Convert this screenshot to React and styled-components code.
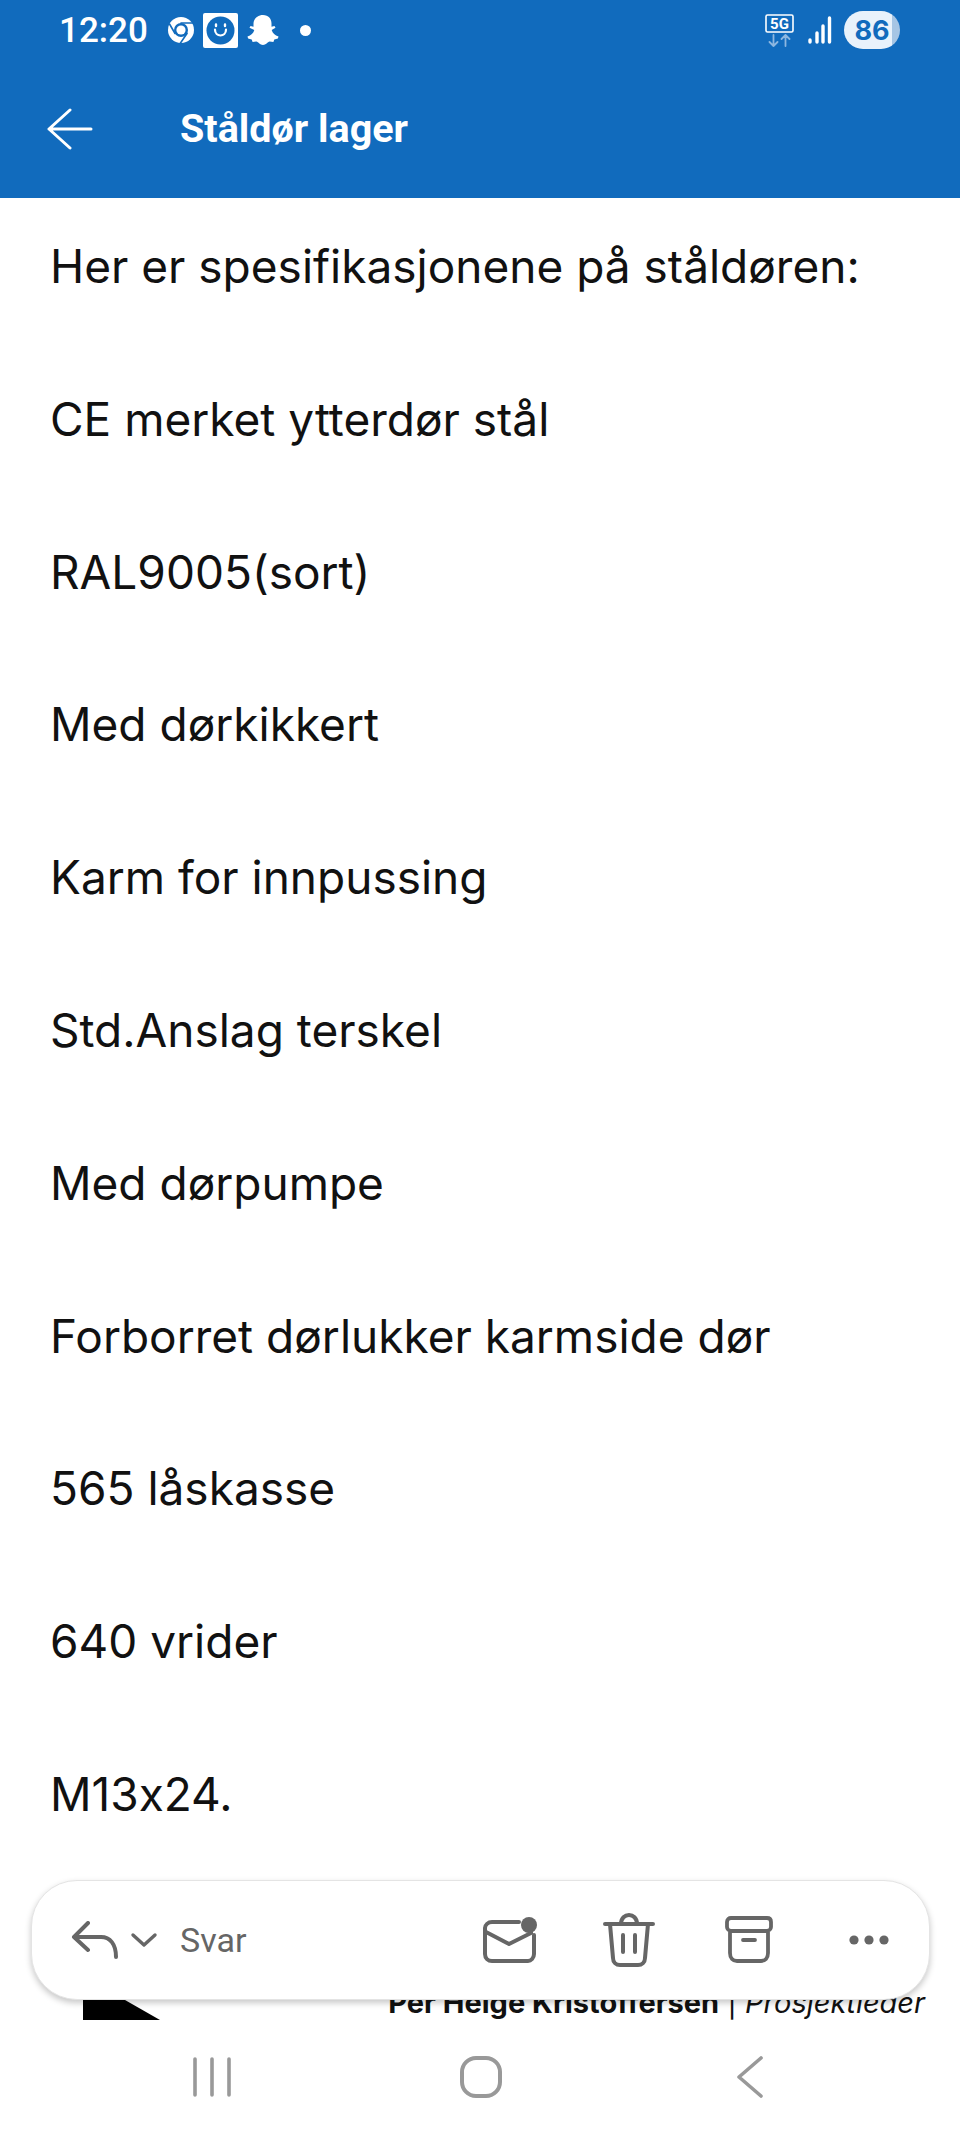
import React from 'react';
import styled, { createGlobalStyle } from "styled-components";

const LINES = [
    'Her er spesifikasjonene på ståldøren:',
    'CE merket ytterdør stål',
    'RAL9005(sort)',
    'Med dørkikkert',
    'Karm for innpussing',
    'Std.Anslag terskel',
    'Med dørpumpe',
    'Forborret dørlukker karmside dør',
    '565 låskasse',
    '640 vrider',
    'M13x24.',
];

const Line = ({ d, w = 3.5, color = 'currentColor' }) => (
    <path d={d} fill="none" stroke={color} strokeWidth={w} strokeLinecap="round" strokeLinejoin="round" />
);

const App = () => {
    return (
        <Page>
            <GlobalStyle />
            <Header>
                <StatusBar>
                    <StatusLeft>
                        <Time>12:20</Time>
                        <svg width="26" height="26" viewBox="0 0 26 26">
                            <circle cx="13" cy="13" r="13" fill="#fff" />
                            <circle cx="13" cy="13" r="7" fill="#116bbd" />
                            <circle cx="13" cy="13" r="4.6" fill="#fff" />
                            <Line d="M13 6H25M7 16.5L1.5 7M19 16.5L12.5 26" w={1.6} color="#116bbd" />
                        </svg>
                        <AppTile>
                            <svg width="29" height="29" viewBox="0 0 29 29">
                                <circle cx="14.5" cy="14.5" r="14" fill="#116bbd" />
                                <Line d="M9 13.5c0 8 11 8 11 0" w={2.2} color="#fff" />
                                <Line d="M10 8.5v1.5M19 8.5v1.5" w={2.4} color="#fff" />
                            </svg>
                        </AppTile>
                        <svg width="32" height="30" viewBox="0 0 32 30">
                            <path d="M16 0c5.5 0 8.5 4 8.5 8.5v3.2l3-.8 1 1.8-3.8 2.3c.8 3.2 3.3 5.2 6.8 6.6l-.6 2-3.6.9-.9 2.4-3.7-.3c-2.2.5-3.7 3.4-6.7 3.4s-4.5-2.9-6.7-3.4l-3.7.3-.9-2.4-3.6-.9-.6-2c3.5-1.4 6-3.4 6.8-6.6L2.5 12.7l1-1.8 3 .8V8.5C6.5 4 10.5 0 16 0z" fill="#fff" />
                        </svg>
                        <Dot />
                    </StatusLeft>
                    <StatusRight>
                        <svg width="30" height="33" viewBox="0 0 30 33">
                            <rect x="1" y="1" width="27" height="17" rx="1.5" fill="none" stroke="#fff" strokeWidth="1.6" />
                            <FiveG x="14.5" y="15">5G</FiveG>
                            <Line d="M8.5 21v11M4.5 28l4 4 4-4M20.5 32V21M16.5 25l4-4 4 4" w={1.8} color="#8db7e0" />
                        </svg>
                        <svg width="25" height="28" viewBox="0 0 25 28">
                            <Line d="M3 24v2M10 17v9M16 10v16M22.5 2v24" w={3.4} color="#fff" />
                        </svg>
                        <Battery level={86}>86</Battery>
                    </StatusRight>
                </StatusBar>
                <AppBar>
                    <BackButton>
                        <svg width="46" height="42" viewBox="0 0 46 42">
                            <Line d="M2 21H44M23 2L2 21L23 40" w={3} color="#fff" />
                        </svg>
                    </BackButton>
                    <Title>Ståldør lager</Title>
                </AppBar>
            </Header>

            <Body>
                {LINES.map(line => <Para key={line}>{line}</Para>)}
                <Signature>
                    <Logo width="80" height="70" viewBox="0 0 80 70">
                        <polygon points="0,26 0,70 77,70" fill="#000" />
                    </Logo>
                    <SignText><b>Per Helge Kristoffersen</b> | <i>Prosjektleder</i></SignText>
                </Signature>
            </Body>

            <Toolbar>
                <ReplyGroup>
                    <svg width="48" height="38" viewBox="0 0 48 38">
                        <Line d="M17 2L3 16L17 29M3 16H30C39 16 45 23 45 36" w={4} />
                    </svg>
                    <svg width="28" height="16" viewBox="0 0 28 16">
                        <Line d="M3 3L14 13L25 3" w={3.4} />
                    </svg>
                    <ReplyLabel>Svar</ReplyLabel>
                </ReplyGroup>
                <Actions>
                    <Action>
                        <svg width="56" height="48" viewBox="0 0 56 48">
                            <Line d="M38 6H11C7 6 4 9 4 12V38C4 42 7 45 11 45H47C50 45 53 42 53 38V19" w={4} />
                            <Line d="M5 16L28 28L50 17" w={4} />
                            <circle cx="48" cy="9" r="8" fill="#666" />
                        </svg>
                    </Action>
                    <Action>
                        <svg width="52" height="54" viewBox="0 0 52 54">
                            <Line d="M2 11H50M18 11C18 -1 34 -1 34 11M7 11L10 45C10 49 13 52 17 52H35C39 52 42 49 42 45L45 11M20 22V39M32 22V39" w={4} />
                        </svg>
                    </Action>
                    <Action>
                        <svg width="48" height="48" viewBox="0 0 48 48">
                            <Line d="M6 2H42C44 2 46 3 46 6V11C46 13 44 15 42 15H6C4 15 2 13 2 11V6C2 3 4 2 6 2ZM5 15V37C5 42 8 45 12 45H36C40 45 43 42 43 37V15M18 24H30" w={3.8} />
                        </svg>
                    </Action>
                    <Action>
                        <svg width="42" height="12" viewBox="0 0 42 12">
                            <circle cx="6" cy="6" r="4.6" fill="#666" />
                            <circle cx="21" cy="6" r="4.6" fill="#666" />
                            <circle cx="36" cy="6" r="4.6" fill="#666" />
                        </svg>
                    </Action>
                </Actions>
            </Toolbar>

            <NavBar>
                <NavSlot>
                    <svg width="38" height="40" viewBox="0 0 38 40">
                        <Line d="M2 2V38M19 2V38M36 2V38" w={3.6} />
                    </svg>
                </NavSlot>
                <NavSlot>
                    <svg width="42" height="42" viewBox="0 0 42 42">
                        <rect x="2" y="2" width="38" height="38" rx="14" fill="none" stroke="currentColor" strokeWidth="4" />
                    </svg>
                </NavSlot>
                <NavSlot>
                    <svg width="28" height="42" viewBox="0 0 28 42">
                        <Line d="M25 2L3 21L25 40" w={3.6} />
                    </svg>
                </NavSlot>
            </NavBar>
        </Page>
    );
};

const GlobalStyle = createGlobalStyle`
    html, body {
        margin: 0;
        padding: 0;
        background: #fff;
    }
`;

const Page = styled.div`
    position: relative;
    display: flex;
    flex-direction: column;
    width: 960px;
    height: 2140px;
    overflow: hidden;
    background: #fff;
    font-family: Inter, "Liberation Sans", sans-serif;
    font-feature-settings: "calt" 0;
`;

const Header = styled.header`
    height: 198px;
    background: #116bbd;
    color: #fff;
    font-family: Roboto, sans-serif;
`;

const StatusBar = styled.div`
    display: flex;
    align-items: center;
    justify-content: space-between;
    height: 60px;
    padding: 0 60px 0 59px;
`;

const StatusLeft = styled.div`
    display: flex;
    align-items: center;
    gap: 9px;
`;

const Time = styled.span`
    font-size: 35px;
    font-weight: 500;
    margin-right: 11px;
`;

const AppTile = styled.div`
    display: flex;
    align-items: center;
    justify-content: center;
    width: 35px;
    height: 35px;
    background: #fff;
    border-radius: 2px;
`;

const Dot = styled.span`
    width: 11px;
    height: 11px;
    margin-left: 12px;
    background: #fff;
    border-radius: 50%;
`;

const StatusRight = styled.div`
    display: flex;
    align-items: center;
    gap: 12px;
`;

const FiveG = styled.text`
    font-family: Roboto, sans-serif;
    font-size: 15px;
    font-weight: 700;
    fill: #fff;
    text-anchor: middle;
`;

const Battery = styled.div`
    display: flex;
    align-items: center;
    justify-content: center;
    width: 56px;
    height: 38px;
    border-radius: 19px;
    background: linear-gradient(to right, #e9f2fb ${p => p.level}%, #a6c5e4 ${p => p.level}%);
    color: #116bbd;
    font-family: Inter, sans-serif;
    font-size: 27px;
    font-weight: 700;
`;

const AppBar = styled.div`
    display: flex;
    align-items: center;
    height: 138px;
    padding: 0 0 1px 47px;
    box-sizing: border-box;
`;

const BackButton = styled.div`
    display: flex;
    width: 133px;
`;

const Title = styled.h1`
    margin: 0;
    font-size: 39.5px;
    font-weight: 700;
`;

const Body = styled.main`
    flex: 1;
    min-height: 0;
    overflow: hidden;
    padding: 30px 50px 0;
    color: #111;
`;

const Para = styled.p`
    margin: 0 0 76.8px;
    font-size: 46px;
    line-height: 76px;
    white-space: nowrap;
`;

const Signature = styled.div`
    display: flex;
    align-items: flex-end;
    justify-content: space-between;
    margin: 118px -15px 0 33px;
`;

const Logo = styled.svg`
    flex: none;
`;

const SignText = styled.div`
    font-size: 29px;
    line-height: 34px;
    white-space: nowrap;
`;

const Toolbar = styled.div`
    position: absolute;
    top: 1880px;
    left: 31px;
    right: 30px;
    display: flex;
    align-items: center;
    justify-content: space-between;
    height: 120px;
    box-sizing: border-box;
    padding-left: 39px;
    background: #fff;
    border: 1px solid #e4e4e4;
    border-radius: 46px;
    box-shadow: 0 3px 6px rgba(0, 0, 0, 0.22);
    color: #666;
`;

const ReplyGroup = styled.div`
    display: flex;
    align-items: center;
    gap: 11px;
`;

const ReplyLabel = styled.span`
    margin-left: 11px;
    font-family: Roboto, sans-serif;
    font-size: 34px;
`;

const Actions = styled.div`
    display: flex;
`;

const Action = styled.div`
    display: flex;
    align-items: center;
    justify-content: center;
    width: 120px;
`;

const NavBar = styled.nav`
    display: grid;
    grid-template-columns: repeat(3, 269px);
    height: 120px;
    padding-left: 77px;
    background: #fff;
    color: #999;
`;

const NavSlot = styled.div`
    display: flex;
    align-items: center;
    justify-content: center;
    padding-bottom: 6px;
`;

export default App;
